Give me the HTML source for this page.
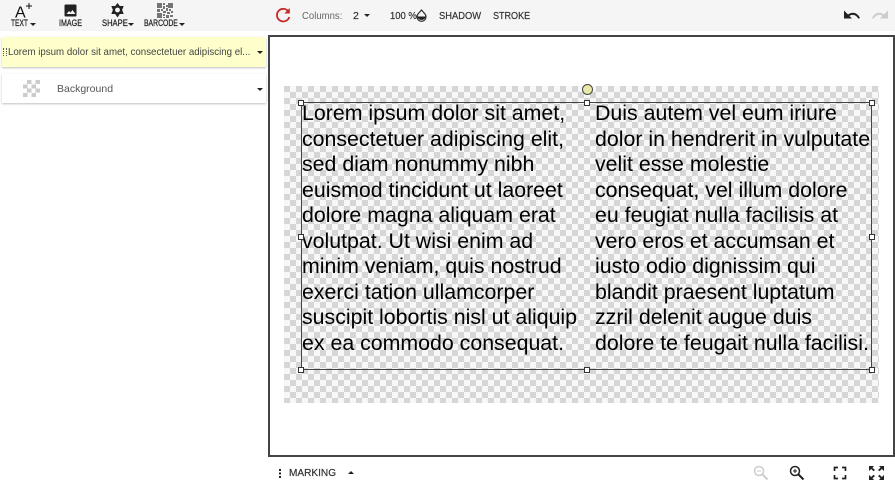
<!DOCTYPE html>
<html><head><meta charset="utf-8"><style>
html,body{margin:0;padding:0}
body{width:895px;height:486px;position:relative;overflow:hidden;background:#fff;font-family:"Liberation Sans",sans-serif;color:#222}
.a{position:absolute;white-space:nowrap}
.lbl{font-size:9.5px;line-height:10px;color:#222;transform-origin:0 0;-webkit-text-stroke:.25px #222}
.tb{font-size:10.5px;line-height:12px;color:#333;transform-origin:0 0;-webkit-text-stroke:.2px #333}
.car{position:absolute;width:0;height:0;border-left:3px solid transparent;border-right:3px solid transparent;border-top:3px solid #222}
.h{position:absolute;width:4px;height:4px;background:#fff;border:1px solid #333}
.t{position:absolute;top:101px;font-size:21.33px;line-height:25.55px;color:#000;white-space:pre}
</style></head><body>
<div class="a" style="left:0;top:0;width:895px;height:31px;background:#f5f5f5"></div>
<div class="a" style="left:268px;top:35px;width:627px;height:422px;border:2px solid #444;box-sizing:border-box"></div>

<svg class="a" style="left:14px;top:2px" width="20" height="17" viewBox="0 0 20 17"><text x="1" y="15.500" font-family="Liberation Sans" font-size="16" fill="#111">A</text><path d="M12 4h6M15 1v6" stroke="#111" stroke-width="1" fill="none"/></svg>
<div class="a lbl" style="left:11px;top:19px;transform:scaleX(.7)">TEXT</div><div class="car" style="left:30px;top:23px"></div>
<svg class="a" style="left:64px;top:4px" width="14" height="13" viewBox="0 0 14 13"><rect x="0.500" y="0.500" width="12" height="12" rx="1" fill="#222"/><path d="M2.500 10l2.500-3 1.500 1.500 2-2.500 3 4z" fill="#f5f5f5"/></svg>
<div class="a lbl" style="left:59px;top:19px;transform:scaleX(.75)">IMAGE</div>
<svg class="a" style="left:110px;top:3px" width="15" height="15" viewBox="0 0 15 15"><path d="M7.500 0l2.300 3h3.900l-1.600 4 1.600 4H9.800l-2.300 3.500L5.200 11H1.300l1.600-4-1.600-4h3.900z" fill="#222"/><circle cx="7.500" cy="7" r="2.400" fill="#f5f5f5"/></svg>
<div class="a lbl" style="left:102px;top:19px;transform:scaleX(.8)">SHAPE</div><div class="car" style="left:128px;top:23px"></div>
<svg class="a" style="left:157px;top:3px" width="16" height="15" viewBox="0 0 16 15" fill="#555"><path d="M0 0h5v5h-5zM11 0h5v5h-5zM0 10h5v5h-5zM6 0h2v2h-2zM9 2h2v2h-2zM6 3h2v3h-2zM0 6h3v3h-3zM4 6h2v2h-2zM9 5h2v3h-2zM12 6h2v2h-2zM14 8h2v2h-2zM6 8h3v2h-3zM10 9h3v2h-3zM6 11h2v2h-2zM9 12h3v3h-3zM13 12h3v2h-3zM6 14h2v1h-2z" opacity=".8"/></svg>
<div class="a lbl" style="left:144px;top:19px;transform:scaleX(.72)">BARCODE</div><div class="car" style="left:179px;top:23px"></div>

<svg class="a" style="left:275px;top:7px" width="16" height="17" viewBox="0 0 16 17"><path d="M13.200 4.200A6.300 6.300 0 1 0 14.300 10" fill="none" stroke="#c62828" stroke-width="1.800"/><path d="M14.800 1v5.500h-5.500z" fill="#c62828"/></svg>
<div class="a" style="left:302px;top:10px;font-size:10.500px;line-height:12px;color:#666;transform:scaleX(.91);transform-origin:0 0">Columns:</div>
<div class="a tb" style="left:353px;top:10px">2</div><div class="car" style="left:364px;top:14px"></div>
<div class="a tb" style="left:390px;top:10px;transform:scaleX(.9)">100 %</div>
<svg class="a" style="left:416px;top:9px" width="11" height="13" viewBox="0 0 11 13"><path d="M5.500 1l3.500 4a4.500 4.500 0 1 1-7 0z" fill="none" stroke="#222" stroke-width="1.100"/><path d="M1.200 7.500h8.600a4.400 4.400 0 0 1-8.600 0z" fill="#222"/></svg>
<div class="a tb" style="left:439px;top:10px;transform:scaleX(.89)">SHADOW</div>
<div class="a tb" style="left:493px;top:10px;transform:scaleX(.86)">STROKE</div>
<svg class="a" style="left:843px;top:9px" width="18" height="12" viewBox="0 0 18 12"><path d="M5 5.500C9 2.500 14 3 17 9l-1.800 .6C13 5.500 9 5 6.500 7L9 9.500H1V1.500z" fill="#222"/></svg>
<svg class="a" style="left:871px;top:9px;transform:scaleX(-1)" width="18" height="12" viewBox="0 0 18 12"><path d="M5 5.500C9 2.500 14 3 17 9l-1.800 .6C13 5.500 9 5 6.500 7L9 9.500H1V1.500z" fill="#ccc"/></svg>

<div class="a" style="left:2px;top:37px;width:264px;height:30px;background:#ffffcc;box-shadow:0 1px 2px rgba(0,0,0,.25)"></div>
<div class="a" style="left:3px;top:48px;width:4px;height:8px;border-left:1px dotted #555;border-right:1px dotted #555;box-sizing:border-box"></div>
<div class="a" style="left:8px;top:46px;font-size:10.500px;line-height:13px;color:#444;transform:scaleX(.925);transform-origin:0 0">Lorem ipsum dolor sit amet, consectetuer adipiscing el...</div>
<div class="car" style="left:257px;top:51px"></div>
<div class="a" style="left:2px;top:74px;width:264px;height:29px;background:#fff;box-shadow:0 1px 2px rgba(0,0,0,.25)"></div>
<div class="a" style="left:23px;top:80px;width:17px;height:17px;background:repeating-conic-gradient(#ccc 0 25%,#fff 0 50%) 0 0/8.500px 8.500px"></div>
<div class="a" style="left:57px;top:83px;font-size:10.500px;line-height:13px;color:#555">Background</div>
<div class="car" style="left:257px;top:88px"></div>

<div class="a" style="left:284px;top:86px;width:595px;height:317px;background:repeating-conic-gradient(#d6d6d6 0 25%,#f7f7f7 0 50%) -6px 0/12px 12px"></div>
<div class="t" style="left:302px">Lorem ipsum dolor sit amet,
consectetuer adipiscing elit,
sed diam nonummy nibh
euismod tincidunt ut laoreet
dolore magna aliquam erat
volutpat. Ut wisi enim ad
minim veniam, quis nostrud
exerci tation ullamcorper
suscipit lobortis nisl ut aliquip
ex ea commodo consequat.</div>
<div class="t" style="left:595px">Duis autem vel eum iriure
dolor in hendrerit in vulputate
velit esse molestie
consequat, vel illum dolore
eu feugiat nulla facilisis at
vero eros et accumsan et
iusto odio dignissim qui
blandit praesent luptatum
zzril delenit augue duis
dolore te feugait nulla facilisi.</div>
<div class="a" style="left:301px;top:102px;width:571px;height:268px;border:1px solid #444;box-sizing:border-box"></div>
<div class="h" style="left:298px;top:100px"></div><div class="h" style="left:584px;top:100px"></div><div class="h" style="left:869px;top:100px"></div>
<div class="h" style="left:298px;top:234px"></div><div class="h" style="left:869px;top:234px"></div>
<div class="h" style="left:298px;top:367px"></div><div class="h" style="left:584px;top:367px"></div><div class="h" style="left:869px;top:367px"></div>
<div class="a" style="left:582px;top:84px;width:9px;height:9px;border-radius:50%;background:#e8e8a8;border:1px solid #444"></div>

<div class="a" style="left:279px;top:469px;width:2px;height:2px;background:#222;box-shadow:0 3.500px #222,0 7px #222"></div>
<div class="a tb" style="left:289px;top:467px;transform:scaleX(.96)">MARKING</div>
<div class="a" style="left:348px;top:471px;width:0;height:0;border-left:3px solid transparent;border-right:3px solid transparent;border-bottom:3px solid #222"></div>
<svg class="a" style="left:753px;top:465px" width="16" height="16" viewBox="0 0 16 16"><circle cx="6" cy="6" r="4.500" fill="none" stroke="#ccc" stroke-width="1.500"/><path d="M9.500 9.500l5 5" stroke="#ccc" stroke-width="2"/><path d="M4 6h4" stroke="#ccc"/></svg>
<svg class="a" style="left:789px;top:465px" width="16" height="16" viewBox="0 0 16 16"><circle cx="6" cy="6" r="4.500" fill="none" stroke="#222" stroke-width="1.500"/><path d="M9.500 9.500l5 5" stroke="#222" stroke-width="2"/><path d="M4 6h4M6 4v4" stroke="#222"/></svg>
<svg class="a" style="left:833px;top:466px" width="14" height="14" viewBox="0 0 14 14"><path d="M1.500 5V1.500H5M9 1.500h3.500V5M1.500 9v3.500H5M9 12.500h3.500V9" fill="none" stroke="#222" stroke-width="1.700"/></svg>
<svg class="a" style="left:868px;top:465px" width="17" height="16" viewBox="0 0 17 16"><path d="M1 1h5L4.500 2.700 7 5 5.500 6.300 3.200 4 1 6zM16 1h-5l1.500 1.700L10 5l1.500 1.300L13.800 4 16 6zM1 15h5l-1.500-1.700L7 11 5.500 9.700 3.200 12 1 10zM16 15h-5l1.500-1.700L10 11l1.500-1.300 2.300 2.300L16 10z" fill="#222"/></svg>
</body></html>
